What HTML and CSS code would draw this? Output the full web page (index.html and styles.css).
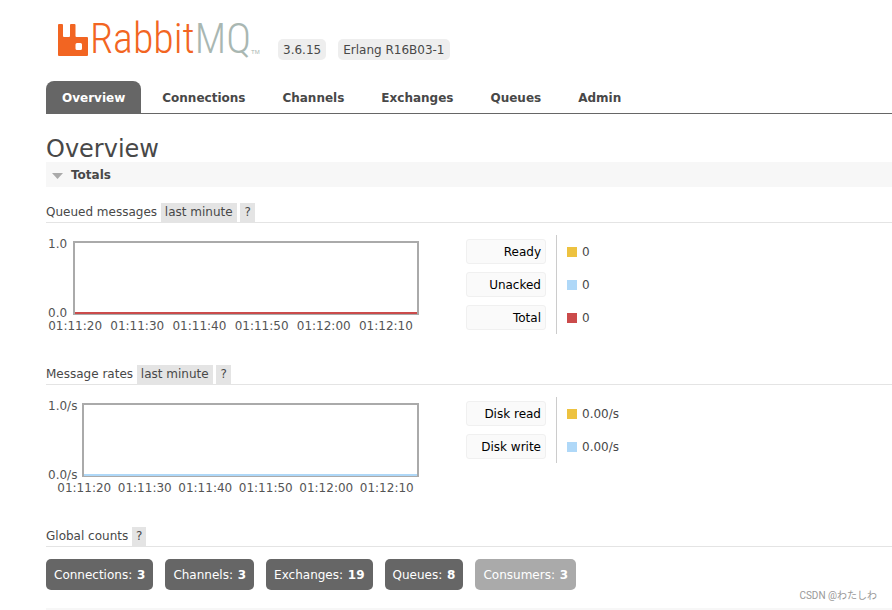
FILE: index.html
```html
<!DOCTYPE html>
<html lang="en">
<head>
    <meta charset="UTF-8">
    <meta name="viewport" content="width=device-width, initial-scale=1.0">
    <title>RabbitMQ Management</title>
    <link rel="stylesheet" href="styles.css">
</head>
<body>
    <header class="header">
        <a class="logo" href="#" aria-label="RabbitMQ">
            <svg class="logo-mark" width="30" height="32" viewBox="0 0 30 32" aria-hidden="true">
                <path fill="#f26522" fill-rule="evenodd" d="M1 0h3q1 0 1 1v11q0 1 1 1h5q1 0 1-1v-11q0-1 1-1h3.500q1 0 1 1v11q0 1 1 1h10.500q1 0 1 1v17q0 1-1 1h-28q-1 0-1-1v-30q0-1 1-1zM19 19q-1.500 0-1.500 1.500v4q0 1.500 1.500 1.500h3.500q1.500 0 1.500-1.500v-4q0-1.500-1.500-1.500z"/>
            </svg>
            <span class="logo-name">Rabbit<span class="logo-mq">MQ</span></span>
            <span class="logo-tm">TM</span>
        </a>
        <span class="version">3.6.15</span>
        <span class="version">Erlang R16B03-1</span>
    </header>

    <nav class="tabs">
        <a class="tab selected" href="#">Overview</a>
        <a class="tab" href="#">Connections</a>
        <a class="tab" href="#">Channels</a>
        <a class="tab" href="#">Exchanges</a>
        <a class="tab" href="#">Queues</a>
        <a class="tab" href="#">Admin</a>
    </nav>

    <main class="main">
        <h1>Overview</h1>
        <h2 class="section-title">
            <svg width="11" height="6" viewBox="0 0 11 6" aria-hidden="true"><path d="M0 0h11l-5.500 6z" fill="#aaa"/></svg>
            Totals
        </h2>

        <section class="block">
            <h3>Queued messages <button class="popup">last minute</button> <button class="popup">?</button></h3>
            <div class="chart-row">
                <div class="chart">
                    <div class="y-axis"><span>1.0</span><span>0.0</span></div>
                    <div class="plot red"></div>
                    <div class="x-axis">
                        <span>01:11:20</span><span>01:11:30</span><span>01:11:40</span><span>01:11:50</span><span>01:12:00</span><span>01:12:10</span>
                    </div>
                </div>
                <table class="legend">
                    <tr><th scope="row"><button class="series">Ready</button></th><td><span class="key yellow"></span>0</td></tr>
                    <tr><th scope="row"><button class="series">Unacked</button></th><td><span class="key blue"></span>0</td></tr>
                    <tr><th scope="row"><button class="series">Total</button></th><td><span class="key red"></span>0</td></tr>
                </table>
            </div>
        </section>

        <section class="block">
            <h3>Message rates <button class="popup">last minute</button> <button class="popup">?</button></h3>
            <div class="chart-row">
                <div class="chart rates">
                    <div class="y-axis"><span>1.0/s</span><span>0.0/s</span></div>
                    <div class="plot blue"></div>
                    <div class="x-axis">
                        <span>01:11:20</span><span>01:11:30</span><span>01:11:40</span><span>01:11:50</span><span>01:12:00</span><span>01:12:10</span>
                    </div>
                </div>
                <table class="legend">
                    <tr><th scope="row"><button class="series">Disk read</button></th><td><span class="key yellow"></span>0.00/s</td></tr>
                    <tr><th scope="row"><button class="series">Disk write</button></th><td><span class="key blue"></span>0.00/s</td></tr>
                </table>
            </div>
        </section>

        <section class="block last">
            <h3>Global counts <button class="popup">?</button></h3>
            <div class="counts">
                <a class="count" href="#">Connections: <strong>3</strong></a>
                <a class="count" href="#">Channels: <strong>3</strong></a>
                <a class="count" href="#">Exchanges: <strong>19</strong></a>
                <a class="count" href="#">Queues: <strong>8</strong></a>
                <span class="count disabled">Consumers: <strong>3</strong></span>
            </div>
        </section>
    </main>
    <div class="watermark">CSDN @わたしわ</div>
</body>
</html>
```

FILE: styles.css
```css
* {
    box-sizing: border-box;
}
body {
    position: relative;
    margin: 0;
    padding-left: 46px;
    background: #fff;
    color: #484848;
    font: 12px/18px Verdana, "DejaVu Sans", sans-serif;
}
a {
    color: inherit;
    text-decoration: none;
}
button {
    border: 0;
    margin: 0;
    font: inherit;
    color: inherit;
    cursor: pointer;
}

/* header */
.header {
    display: flex;
    align-items: flex-end;
    gap: 12px;
    height: 60px;
}
.logo {
    display: flex;
    align-items: flex-end;
    width: 220px;
    height: 60px;
    padding: 0 0 4px 12px;
}
.logo-name {
    margin-left: 2px;
    font: 300 42px/34px "Roboto Condensed", "Liberation Sans Narrow", "Open Sans", sans-serif;
    color: #f26522;
}
.logo-mq {
    color: #a9b7b2;
}
.logo-tm {
    font: 6px/8px "Liberation Sans", sans-serif;
    color: #a9b7b2;
}
.version {
    padding: 3px 5px 1px;
    border-radius: 5px;
    background: #eee;
    line-height: 17px;
}

/* tabs */
.tabs {
    display: flex;
    gap: 5px;
    margin-top: 21px;
    border-bottom: 1px solid #666;
}
.tab {
    padding: 8px 16px 6px;
    border-radius: 8px 8px 0 0;
    font-weight: bold;
}
.tab.selected {
    background: #666;
    color: #fff;
}

/* content */
h1 {
    margin: 23px 0 0;
    font-size: 24px;
    font-weight: normal;
    line-height: 25px;
}
.section-title {
    display: flex;
    align-items: center;
    gap: 8px;
    margin: 0 0 16px;
    padding: 4px 6px 2px;
    background: #f7f7f7;
    font-size: 12px;
    line-height: 19px;
}
.block {
    height: 162px;
}
h3 {
    margin: 0;
    border-bottom: 1px solid #e4e4e4;
    font-size: 12px;
    font-weight: normal;
    line-height: 19px;
}
.popup {
    padding: 0 4px;
    background: #e4e4e4;
}
.chart-row {
    display: flex;
    gap: 47px;
    padding-top: 12px;
}
.chart {
    display: grid;
    grid-template-columns: 27px 1fr;
    grid-template-rows: 74px 18px;
    width: 373px;
    margin-top: 6px;
    color: #545454;
}
.chart.rates {
    grid-template-columns: 36px 1fr;
}
.y-axis {
    display: flex;
    flex-direction: column;
    justify-content: space-between;
    margin: -6px 0 -7px;
    padding-left: 2px;
}
.plot {
    border: 2px solid #aaa;
    border-bottom-width: 1px;
    background: linear-gradient(to top, currentColor 2px, #fff 2px);
}
.plot.red {
    color: #cb4b4b;
}
.plot.blue {
    color: #afd8f8;
}
.x-axis {
    grid-column: 1 / -1;
    display: grid;
    grid-template-columns: repeat(6, 1fr);
    margin: 0 2px 0 -2px;
    padding-top: 2px;
    text-align: center;
    white-space: nowrap;
}
.rates .x-axis {
    padding-left: 10px;
}
.legend {
    align-self: flex-start;
    border-collapse: collapse;
}
.legend th {
    padding: 4px 10px 4px 0;
    border-right: 1px solid #ccc;
    font-weight: normal;
}
.legend td {
    padding: 0 10px;
}
.series {
    display: block;
    width: 80px;
    padding: 4px 4px 2px;
    border: 1px solid #f0f0f0;
    border-radius: 3px;
    background: #fafafa;
    color: #000;
    line-height: 17px;
    text-align: right;
}
.key {
    display: inline-block;
    width: 10px;
    height: 10px;
    margin-right: 5px;
    vertical-align: -1px;
}
.key.yellow {
    background: #edc240;
}
.key.blue {
    background: #afd8f8;
}
.key.red {
    background: #cb4b4b;
}
.block.last {
    height: auto;
    border-bottom: 2px solid #f7f7f7;
}
.counts {
    display: flex;
    gap: 12px;
    padding: 12px 0 18px;
}
.count {
    padding: 8px 8px 6px;
    border-radius: 5px;
    background: #666;
    color: #fff;
    line-height: 17px;
}
.count strong {
    margin-left: 1px;
}
.count.disabled {
    background: #aaa;
}
.watermark {
    position: absolute;
    right: 15px;
    bottom: 6px;
    color: #999;
    font: 10px/16px Roboto, "Noto Sans CJK JP", sans-serif;
}
```
